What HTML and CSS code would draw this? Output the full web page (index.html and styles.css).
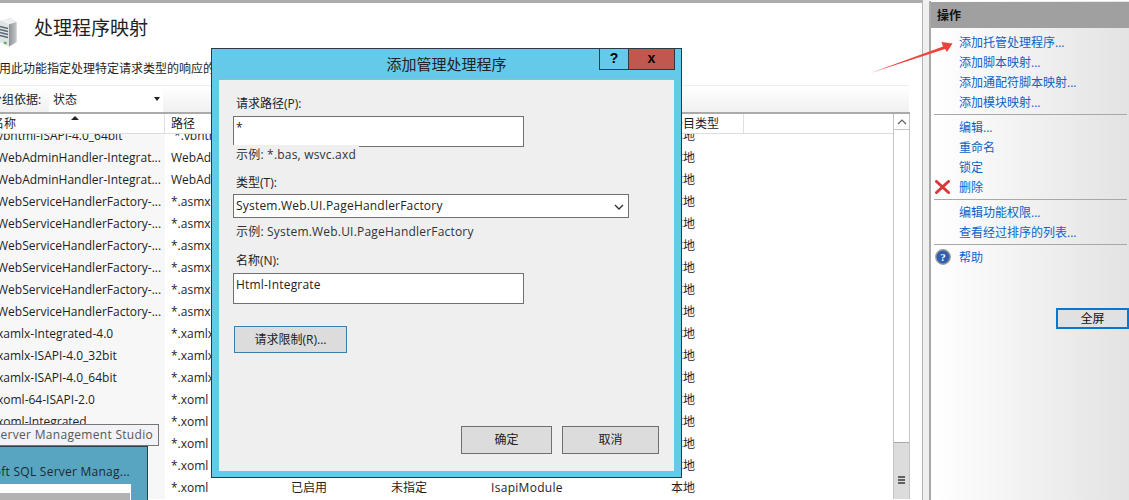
FILE: index.html
```html
<!DOCTYPE html>
<html lang="zh-CN">
<head>
<meta charset="utf-8">
<title>处理程序映射</title>
<link rel="stylesheet" href="styles.css">
</head>
<body>
<div class="page">
  <main class="main">
    <header class="head">
      <svg class="server" width="17" height="30" viewBox="0 0 17 30"><defs><linearGradient id="sv" x1="0" x2="1" y1="0" y2="0"><stop offset="0" stop-color="#8d9296"/><stop offset="1" stop-color="#c4c8cb"/></linearGradient></defs><path d="M0 4 L10 1 L16.5 5 L16.5 25 L9 29.5 L0 25Z" fill="#cfd3d6"/><path d="M0 4 L10 1 L16.5 5 L9 7.5Z" fill="#eef0f1"/><path d="M9 7.5 L16.5 5 L16.5 25 L9 29.5Z" fill="url(#sv)"/><path d="M0 4.5 L9 7.5 L9 29.5 L0 25Z" fill="#dfe3e5"/><path d="M0 9.5 L8 11.5 M0 12.5 L8 14.5 M0 15.5 L8 17.5 M0 18.5 L8 20.5" stroke="#596a72" stroke-width="1.3"/><path d="M4 25.5 L6.5 26.5" stroke="#49b24a" stroke-width="2"/></svg>
      <h1 class="title">处理程序映射</h1>
    </header>
    <p class="desc">用此功能指定处理特定请求类型的响应的资源，如 HTML 页面、脚本文件</p>
    <div class="group">
      <span class="group-label">分组依据:</span>
      <span class="group-select">状态<i class="caret"></i></span>
    </div>
    <section class="table">
      <div class="list">
        <div class="cols thead">
          <span class="cell name">名称<i class="sort"></i></span><span class="cell">路径</span><span class="cell">状态</span><span class="cell">路径类型</span><span class="cell">处理程序</span><span class="cell last">条目类型</span>
        </div>
        <div class="rows">
          <div class="cols row"><span class="cell name">vbhtml-ISAPI-4.0_64bit</span><span class="cell">&nbsp;*.vbhtml</span><span class="cell">已启用</span><span class="cell">未指定</span><span class="cell">IsapiModule</span><span class="cell last">本地</span></div>
          <div class="cols row"><span class="cell name">WebAdminHandler-Integrat...</span><span class="cell">WebAdmin.axd</span><span class="cell">已启用</span><span class="cell">未指定</span><span class="cell">IsapiModule</span><span class="cell last">本地</span></div>
          <div class="cols row"><span class="cell name">WebAdminHandler-Integrat...</span><span class="cell">WebAdmin.axd</span><span class="cell">已启用</span><span class="cell">未指定</span><span class="cell">IsapiModule</span><span class="cell last">本地</span></div>
          <div class="cols row"><span class="cell name">WebServiceHandlerFactory-...</span><span class="cell">*.asmx</span><span class="cell">已启用</span><span class="cell">未指定</span><span class="cell">IsapiModule</span><span class="cell last">本地</span></div>
          <div class="cols row"><span class="cell name">WebServiceHandlerFactory-...</span><span class="cell">*.asmx</span><span class="cell">已启用</span><span class="cell">未指定</span><span class="cell">IsapiModule</span><span class="cell last">本地</span></div>
          <div class="cols row"><span class="cell name">WebServiceHandlerFactory-...</span><span class="cell">*.asmx</span><span class="cell">已启用</span><span class="cell">未指定</span><span class="cell">IsapiModule</span><span class="cell last">本地</span></div>
          <div class="cols row"><span class="cell name">WebServiceHandlerFactory-...</span><span class="cell">*.asmx</span><span class="cell">已启用</span><span class="cell">未指定</span><span class="cell">IsapiModule</span><span class="cell last">本地</span></div>
          <div class="cols row"><span class="cell name">WebServiceHandlerFactory-...</span><span class="cell">*.asmx</span><span class="cell">已启用</span><span class="cell">未指定</span><span class="cell">IsapiModule</span><span class="cell last">本地</span></div>
          <div class="cols row"><span class="cell name">WebServiceHandlerFactory-...</span><span class="cell">*.asmx</span><span class="cell">已启用</span><span class="cell">未指定</span><span class="cell">IsapiModule</span><span class="cell last">本地</span></div>
          <div class="cols row"><span class="cell name">xamlx-Integrated-4.0</span><span class="cell">*.xamlx</span><span class="cell">已启用</span><span class="cell">未指定</span><span class="cell">IsapiModule</span><span class="cell last">本地</span></div>
          <div class="cols row"><span class="cell name">xamlx-ISAPI-4.0_32bit</span><span class="cell">*.xamlx</span><span class="cell">已启用</span><span class="cell">未指定</span><span class="cell">IsapiModule</span><span class="cell last">本地</span></div>
          <div class="cols row"><span class="cell name">xamlx-ISAPI-4.0_64bit</span><span class="cell">*.xamlx</span><span class="cell">已启用</span><span class="cell">未指定</span><span class="cell">IsapiModule</span><span class="cell last">本地</span></div>
          <div class="cols row"><span class="cell name">xoml-64-ISAPI-2.0</span><span class="cell">*.xoml</span><span class="cell">已启用</span><span class="cell">未指定</span><span class="cell">IsapiModule</span><span class="cell last">本地</span></div>
          <div class="cols row"><span class="cell name">xoml-Integrated</span><span class="cell">*.xoml</span><span class="cell">已启用</span><span class="cell">未指定</span><span class="cell">IsapiModule</span><span class="cell last">本地</span></div>
          <div class="cols row"><span class="cell name">xoml-Integrated-4.0</span><span class="cell">*.xoml</span><span class="cell">已启用</span><span class="cell">未指定</span><span class="cell">IsapiModule</span><span class="cell last">本地</span></div>
          <div class="cols row"><span class="cell name">xoml-ISAPI-2.0</span><span class="cell">*.xoml</span><span class="cell">已启用</span><span class="cell">未指定</span><span class="cell">IsapiModule</span><span class="cell last">本地</span></div>
          <div class="cols row"><span class="cell name">xoml-ISAPI-4.0</span><span class="cell">*.xoml</span><span class="cell">已启用</span><span class="cell">未指定</span><span class="cell">IsapiModule</span><span class="cell last">本地</span></div>
        </div>
      </div>
      <div class="scrollbar">
        <div class="sb-up"><svg width="10" height="6" viewBox="0 0 10 6"><path d="M1 5 L5 1 L9 5" fill="none" stroke="#606060" stroke-width="1.2"/></svg></div>
        <div class="sb-track"></div>
        <div class="sb-thumb"><i></i><i></i><i></i></div>
      </div>
    </section>
  </main>
  <div class="gutter"></div>
  <aside class="panel">
    <h2 class="panel-title">操作</h2>
    <ul class="actions">
      <li><a>添加托管处理程序...</a></li>
      <li><a>添加脚本映射...</a></li>
      <li><a>添加通配符脚本映射...</a></li>
      <li><a>添加模块映射...</a></li>
    </ul>
    <ul class="actions sep">
      <li><a>编辑...</a></li>
      <li><a>重命名</a></li>
      <li><a>锁定</a></li>
      <li class="has-icon"><svg class="ico del" width="15" height="14" viewBox="0 0 15 14"><path d="M1.5 1.5 L13.5 12.5 M13.5 1.5 L1.5 12.5" stroke="#d8383a" stroke-width="3" stroke-linecap="round"/></svg><a>删除</a></li>
    </ul>
    <ul class="actions sep">
      <li><a>编辑功能权限...</a></li>
      <li><a>查看经过排序的列表...</a></li>
    </ul>
    <ul class="actions sep">
      <li class="has-icon"><svg class="ico hlp" width="16" height="16" viewBox="0 0 16 16"><circle cx="8" cy="8" r="7.2" fill="#2f5fae" stroke="#9a9a9a" stroke-width="1.4"/><text class="qmark" x="8" y="12" text-anchor="middle">?</text></svg><a>帮助</a></li>
    </ul>
    <button class="fullscreen" type="button">全屏</button>
  </aside>
</div>

<div class="taskbar-tip"><span class="tip-text">Microsoft SQL Server Management Studio</span></div>
<div class="thumb">
  <div class="thumb-title"><span>Microsoft SQL Server Manag...</span></div>
  <div class="thumb-preview"><div class="thumb-shot"></div></div>
</div>

<svg class="arrow" width="90" height="36" viewBox="0 0 90 36"><path d="M0.5 33 L73 6.5 L71.5 2 L82.5 3.5 L77 12 L75 9 Z" fill="#f2413d"/></svg>

<div class="dialog">
  <div class="dlg-bar">
    <span class="dlg-title">添加管理处理程序</span>
    <span class="dlg-btn help">?</span>
    <span class="dlg-btn close">x</span>
  </div>
  <form class="dlg-body">
    <label class="lbl first">请求路径(P):</label>
    <div class="input tall">*</div>
    <div class="hint over">示例: *.bas, wsvc.axd</div>
    <label class="lbl type">类型(T):</label>
    <div class="input select">System.Web.UI.PageHandlerFactory<svg width="10" height="6" viewBox="0 0 10 6"><path d="M1 1 L5 5 L9 1" fill="none" stroke="#333" stroke-width="1.4"/></svg></div>
    <div class="hint">示例: System.Web.UI.PageHandlerFactory</div>
    <label class="lbl name-lbl">名称(N):</label>
    <div class="input tall">Html-Integrate</div>
    <button class="btn limit" type="button">请求限制(R)...</button>
    <div class="dlg-foot">
      <button class="btn ok" type="button">确定</button>
      <button class="btn cancel" type="button">取消</button>
    </div>
  </form>
</div>
</body>
</html>
```
FILE: styles.css
```css
* { box-sizing: border-box; }
html, body { margin: 0; height: 100%; overflow: hidden; background: #fff; }
body {
  font-family: "Open Sans", "Noto Sans CJK SC", sans-serif;
  font-size: 12px;
  line-height: 16px;
  color: #1e1e1e;
}
.page { display: flex; width: 1129px; height: 500px; }
.main {
  width: 922px;
  height: 500px;
  flex: none;
  border-top: 3px solid #adadad;
  overflow: hidden;
  padding-right: 13px;
}
.gutter {
  width: 7px;
  flex: none;
  background: #f0f0f0;
  border-left: 1px solid #b5b5b5;
}
.head { display: flex; align-items: center; height: 52px; padding-bottom: 3px; }
.server { margin: 9px 17px 0 0; flex: none; }
.title { margin: 0; font-size: 19px; font-weight: 400; line-height: 24px; color: #222; white-space: nowrap; }
.desc { margin: 6px 0 0 -1px; height: 16px; white-space: nowrap; overflow: hidden; }
.group {
  display: flex;
  align-items: center;
  height: 28px;
  margin-top: 8px;
  border-top: 1px solid #eee;
  background: linear-gradient(#fff, #f0f0f0);
}
.group-label { width: 49px; margin: 0 10px 0 -10px; flex: none; white-space: nowrap; }
.group-select {
  position: relative;
  width: 114px;
  height: 25px;
  line-height: 25px;
  padding-left: 4px;
  background: #fff;
}
.caret {
  position: absolute;
  right: 3px;
  top: 10px;
  border: 3px solid transparent;
  border-top: 4px solid #222;
  border-bottom: 0;
}
.table {
  display: flex;
  height: 387px;
  border-top: 2px solid #aaa;
  margin: -1px -1px 0 0;
}
.list { flex: 1; min-width: 0; overflow: hidden; }
.cols { display: grid; grid-template-columns: 165px 120px 100px 100px 186px 73px 1fr; }
.thead { position: relative; z-index: 1; height: 20px; border-bottom: 1px solid #ddd; line-height: 19px; background: #fff; }
.thead .cell { padding-left: 6px; position: relative; }
.thead .cell.name { padding-left: 0; margin-left: -8px; border-right: 1px solid #e0e0e0; background: #fff; }
.thead .cell.last { border-right: 1px solid #e0e0e0; padding-left: 0; }
.rows { margin-top: -9px; }
.row { height: 22px; line-height: 22px; }
.row .cell { padding-left: 6px; }
.row .cell:nth-child(5) { letter-spacing: .3px; }
.row .cell.name { padding-left: 0; margin-left: -3px; background: #f7f7f7; }
.row .cell.last { padding-left: 0; }
.cell { white-space: nowrap; overflow: hidden; }
.sort {
  position: absolute;
  left: 79px;
  top: 2px;
  border: 4px solid transparent;
  border-bottom: 4px solid #222;
  border-top: 0;
}
.scrollbar {
  width: 17px;
  flex: none;
  display: flex;
  flex-direction: column;
  border-left: 1px solid #c4c4c4;
  border-right: 1px solid #c4c4c4;
}
.sb-up { height: 16px; display: flex; align-items: center; justify-content: center; background: #fff; border-bottom: 1px solid #c4c4c4; }
.sb-track { flex: 1; background: #fff; }
.sb-thumb {
  height: 57px;
  background: #dcdcdc;
  border-top: 1px solid #a8a8a8;
  display: flex;
  flex-direction: column;
  gap: 1px;
  align-items: center;
  padding-top: 33px;
}
.sb-thumb i { width: 7px; height: 2px; background: #5f5f5f; }

.panel {
  position: relative;
  flex: 1;
  min-width: 0;
  margin-top: 1px;
  border-left: 2px solid #a9a9a9;
  background: linear-gradient(90deg, #fff, #e3e3e3);
}
.panel-title {
  margin: 1px 0 0;
  height: 26px;
  padding: 6px 0 0 6px;
  font-size: 12px;
  font-weight: 700;
  line-height: 16px;
  color: #111;
  background: #a0a0a0;
}
.actions { list-style: none; margin: 5px 0 0; padding: 0; }
.actions li { position: relative; height: 20px; line-height: 20px; padding-left: 28px; white-space: nowrap; }
.actions a { color: #0a64c8; }
.actions.sep { margin: 1px 2px 0 3px; padding-top: 3px; border-top: 1px solid #a8a8a8; }
.sep li { padding-left: 25px; }
.ico { position: absolute; left: 1px; }
.del { top: 2px; }
.hlp { top: 1px; }
.qmark { font: 700 11px "Liberation Serif", serif; fill: #fff; }
.fullscreen {
  position: absolute;
  right: 0;
  top: 307px;
  width: 73px;
  height: 21px;
  padding: 0;
  border: 2px solid #0078d7;
  background: #e1e1e1;
  font: inherit;
  color: #111;
}

.taskbar-tip {
  position: absolute;
  left: -2px;
  top: 424px;
  width: 161px;
  height: 22px;
  border: 1px solid #767676;
  background: #f2f2f7;
  color: #575757;
  line-height: 20px;
  letter-spacing: .3px;
  overflow: hidden;
  white-space: nowrap;
}
.tip-text { display: block; float: right; padding-right: 5px; }
.thumb {
  position: absolute;
  left: -2px;
  top: 446px;
  width: 150px;
  height: 54px;
  border: 1px solid #2f3f48;
  border-bottom: 0;
  background: #57a5c1;
  overflow: hidden;
}
.thumb-title { height: 37px; padding-top: 17px; line-height: 16px; color: #1a2a33; letter-spacing: .25px; white-space: nowrap; overflow: hidden; }
.thumb-title span { display: block; float: right; padding-right: 17px; }
.thumb-preview { width: 132px; height: 18px; background: #fff; padding: 9px 1px 0 0; }
.thumb-shot { height: 9px; background: #b2b2b2; }

.arrow { position: absolute; left: 870px; top: 40px; z-index: 3; }

.dialog {
  position: absolute;
  z-index: 2;
  left: 211px;
  top: 48px;
  width: 471px;
  height: 430px;
  border: 1px solid #2b3a44;
  background: #65c9ea;
  padding: 0 7px 6px;
  display: flex;
  flex-direction: column;
}
.dlg-bar { position: relative; height: 30px; flex: none; display: flex; justify-content: flex-end; }
.dlg-title { position: absolute; left: 0; right: 0; top: 5px; text-align: center; font-size: 15px; line-height: 20px; color: #222; }
.dlg-btn {
  position: relative;
  height: 21px;
  border: 1px solid #2b3a44;
  border-top: 0;
  text-align: center;
  font-family: "Liberation Sans", sans-serif;
  font-weight: 700;
  font-size: 14px;
  line-height: 18px;
  color: #000;
}
.help { width: 29px; border-right: 0; }
.close { width: 47px; background: #c0584f; margin-right: -1px; }
.dlg-body { flex: 1; display: flex; flex-direction: column; background: #efefef; padding: 0 14px; border-top: 1px solid #9fb9c4; }
.lbl { display: block; height: 16px; line-height: 16px; padding-left: 3px; color: #222; }
.lbl.first { margin-top: 16px; }
.lbl.type { margin-top: 12px; }
.lbl.name-lbl { margin-top: 13px; }
.input { margin-top: 4px; border: 1px solid #707070; background: #fff; padding-left: 2px; color: #222; letter-spacing: .2px; }
.tall { width: 291px; height: 31px; line-height: 16px; padding-top: 3px; }
.select {
  width: 396px;
  height: 24px;
  margin-top: 3px;
  line-height: 21px;
  position: relative;
}
.select svg { position: absolute; right: 4px; top: 9px; }
.hint { margin-top: 6px; height: 16px; line-height: 16px; padding-left: 3px; color: #333; letter-spacing: .2px; }
.hint.over { margin-top: -2px; width: 126px; height: 18px; line-height: 20px; background: #efefef; position: relative; }
.btn {
  padding: 0;
  font: inherit;
  color: #222;
  background: #dcdcdc;
  border: 1px solid #707070;
}
.limit { width: 113px; height: 27px; margin: 22px 0 0 1px; border-color: #3d7ea6; }
.dlg-foot { display: flex; gap: 10px; margin-top: 73px; padding-left: 228px; }
.ok { width: 91px; height: 28px; }
.cancel { width: 97px; height: 28px; }
```
